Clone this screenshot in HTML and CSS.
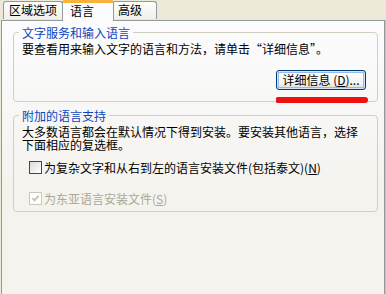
FILE: index.html
```html
<!DOCTYPE html>
<html>
<head>
<meta charset="utf-8">
<link rel="stylesheet" href="styles.css">
</head>
<body>
<div class="tabs">
  <div class="tab first">区域选项</div>
  <div class="tab active">语言</div>
  <div class="tab">高级</div>
</div>
<div class="panel">
  <fieldset class="group g1">
    <legend>文字服务和输入语言</legend>
    <p class="text">要查看用来输入文字的语言和方法，请单击“详细信息”。</p>
    <div class="btnrow">
      <button class="btn">详细信息 (<u>D</u>)...</button>
      <span class="mark"></span>
    </div>
  </fieldset>
  <fieldset class="group g2">
    <legend>附加的语言支持</legend>
    <p class="text">大多数语言都会在默认情况下得到安装。要安装其他语言，选择<br>下面相应的复选框。</p>
    <label class="check c1"><span class="box"></span>为复杂文字和从右到左的语言安装文件(包括泰文)(<u>N</u>)</label>
    <label class="check c2 disabled"><span class="box checked"><svg viewBox="0 0 11 11" width="11" height="11"><path d="M2.5 5.2 L4.5 7.4 L8.6 2.8" fill="none" stroke="#c3c1b3" stroke-width="1.8"/></svg></span>为东亚语言安装文件(<u>S</u>)</label>
  </fieldset>
</div>
</body>
</html>
```
FILE: styles.css
```css
html, body {
  margin: 0;
  padding: 0;
}
body {
  width: 386px;
  height: 294px;
  overflow: hidden;
  background: #ece9d8;
  font-family: "Noto Sans CJK SC", "Noto Sans", sans-serif;
  font-size: 12px;
  color: #000;
}
.tabs {
  display: flex;
  align-items: flex-end;
  height: 20px;
  padding-left: 3px;
  position: relative;
  z-index: 2;
}
.tab {
  box-sizing: border-box;
  height: 18px;
  line-height: 15px;
  padding: 0 5px;
  border: 1px solid #919b9c;
  border-bottom: none;
  border-radius: 3px 3px 0 0;
  background: linear-gradient(#fefefe, #f0efe8);
  margin-bottom: 1px;
  margin-left: -1px;
}
.tab.first {
  margin-left: 0;
  width: 60px;
}
.tab.active {
  height: 21px;
  margin-bottom: -1px;
  width: 52px;
  padding: 0 7px;
  background: #fcfcfe;
  border-top: 3px solid #f9b23b;
  line-height: 16px;
  border-radius: 3px 3px 0 0;
  margin-right: -1px;
  position: relative;
  z-index: 3;
}
.tab:last-child {
  width: 45px;
}
.panel {
  box-sizing: border-box;
  height: 275px;
  margin: 0 1px 0 1px;
  border: 1px solid #919b9c;
  box-shadow: 1px 0 0 #c0c2b8, 2px 0 0 #d5d3c8;
  background: linear-gradient(#fcfcfe, #f4f3ee 60%);
  padding: 5px 6px 0 11px;
}
.group {
  margin: 0;
  border: 1px solid #d0d0bf;
  border-radius: 4px;
  padding: 0 8px;
  min-width: 0;
}
.group legend {
  color: #0b45c0;
  line-height: 13px;
  padding: 0 3px;
  margin-left: -3px;
}
.text {
  margin: 0;
  line-height: 12.5px;
}
.g1 .text {
  margin-top: 3px;
  line-height: 13px;
}
.g1 {
  padding-bottom: 11px;
}
.btnrow {
  display: flex;
  justify-content: flex-end;
  margin-top: 15px;
  padding-right: 3px;
  position: relative;
}
.btn {
  box-sizing: border-box;
  width: 90px;
  height: 20px;
  font: inherit;
  font-size: 12px;
  line-height: 16px;
  padding: 0;
  border: 1px solid #003c74;
  border-radius: 3px;
  background: linear-gradient(#ffffff, #f3f3ef 70%, #dcdad0);
  box-shadow: inset 0 0 0 1px #cee7ff, inset 0 0 0 2px #98b8ea;
  color: #000;
}
.mark {
  position: absolute;
  right: 1px;
  top: 27px;
  width: 92px;
  height: 6px;
  border-radius: 2px 4px 4px 2px;
  background: #ee1111;
}
.g2 {
  margin-top: 7px;
  padding-bottom: 6px;
}
.g2 .text {
  margin-top: 4px;
}
.check {
  display: flex;
  align-items: center;
  height: 13px;
  line-height: 13px;
  padding-left: 7px;
}
.c1 {
  margin-top: 10px;
}
.c2 {
  margin-top: 18px;
}
.box {
  box-sizing: border-box;
  width: 13px;
  height: 13px;
  border: 1px solid #1c5180;
  background: linear-gradient(135deg, #dcdcd7, #ffffff);
  margin-right: 2px;
  display: flex;
  align-items: center;
  justify-content: center;
}
.disabled {
  color: #aca899;
}
.disabled .box {
  border-color: #cac8bb;
  background: #fff;
}
```
